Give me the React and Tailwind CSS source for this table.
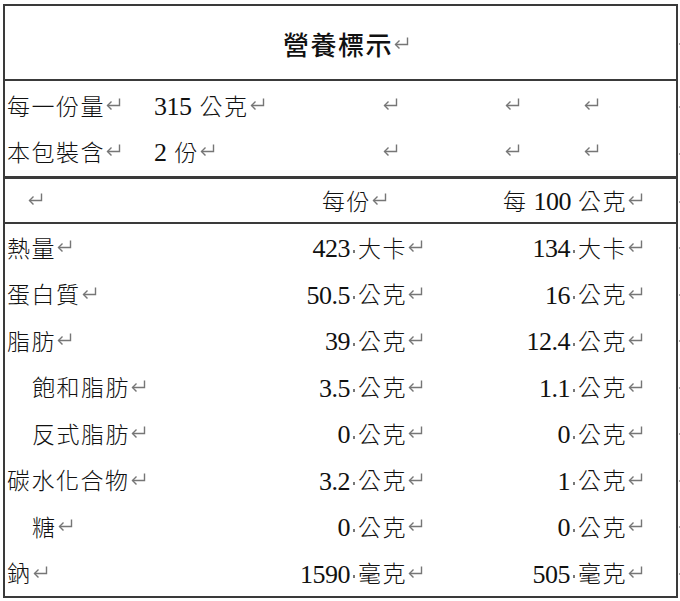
import React from "react";

const Ret = ({ cls = "" }) => (
  <svg
    width="17"
    height="14"
    viewBox="0 0 17 14"
    fill="none"
    stroke="#767676"
    strokeWidth="1.4"
    className={"inline-block shrink-0 mb-[6px] " + cls}
  >
    <path d="M14.5 1.5V8.5H2.5" />
    <path d="M6.5 4.5L2.5 8.5L6.5 12.5" />
  </svg>
);

const Dot = () => (
  <span className="inline-block w-[2px] h-[3px] bg-[#777] mx-[3px] mt-[4px] shrink-0" />
);

const EndMark = () => (
  <span className="absolute -right-[5px] top-1/2 w-[2px] h-[2px] bg-[#aaa]" />
);

const Num = ({ children, cls = "" }) => (
  <span className={"text-[26px] tracking-[-0.5px] " + cls}>{children}</span>
);

const Val = ({ n, u }) => (
  <span className="flex items-center justify-end">
    <Num>{n}</Num>
    <Dot />
    <span className="tracking-[1.5px]">{u}</span>
    <Ret />
  </span>
);

const rows = [
  { label: "熱量", indent: false, a: ["423", "大卡"], b: ["134", "大卡"] },
  { label: "蛋白質", indent: false, a: ["50.5", "公克"], b: ["16", "公克"] },
  { label: "脂肪", indent: false, a: ["39", "公克"], b: ["12.4", "公克"] },
  { label: "飽和脂肪", indent: true, a: ["3.5", "公克"], b: ["1.1", "公克"] },
  { label: "反式脂肪", indent: true, a: ["0", "公克"], b: ["0", "公克"] },
  { label: "碳水化合物", indent: false, a: ["3.2", "公克"], b: ["1", "公克"] },
  { label: "糖", indent: true, a: ["0", "公克"], b: ["0", "公克"] },
  { label: "鈉", indent: false, a: ["1590", "毫克"], b: ["505", "毫克"] },
];

export default function App() {
  return (
    <div className="w-[680px] h-[601px] bg-white pt-[4px] pl-[3px] font-['Liberation_Serif','Noto_Sans_CJK_TC','Noto_Sans_CJK_SC',serif] font-light text-[23px] text-[#111] leading-none">
      <div className="w-[675px] border-2 border-[#3a3a3a] flex flex-col">
        {/* title */}
        <div className="relative h-[75px] flex items-center justify-center border-b-2 border-[#3a3a3a] pl-[12px] pt-[9px]">
          <span className="text-[26px] tracking-[1.5px] font-medium">營養標示</span>
          <Ret cls="mb-[8px]" />
          <EndMark />
        </div>

        {/* serving info */}
        <div className="flex flex-col border-b-[3px] border-[#3a3a3a] pt-[1px]">
          {[
            ["每一份量", "315", "公克", "h-[48px] pt-[2px]"],
            ["本包裝含", "2", "份", "h-[46px]"],
          ].map(([l, n, u, h]) => (
            <div key={l} className={"relative grid grid-cols-[144px_233px_122px_79px_1fr] items-center " + h}>
              <span className="flex items-center pl-[2px] tracking-[1.5px]">
                {l}
                <Ret />
              </span>
              <span className="flex items-center pl-[5px]">
                <Num>{n}</Num>
                <span className="ml-[8px] tracking-[1.5px]">{u}</span>
                <Ret />
              </span>
              <span className="flex items-center">
                <Ret />
              </span>
              <span className="flex items-center">
                <Ret />
              </span>
              <span className="flex items-center">
                <Ret />
              </span>
              <EndMark />
            </div>
          ))}
        </div>

        {/* header */}
        <div className="relative h-[45px] grid grid-cols-[254px_165px_220px] items-center border-b-2 border-[#3a3a3a] pt-[3px]">
          <span className="flex items-center pl-[22px]">
            <Ret />
          </span>
          <span className="flex items-center justify-end pr-[36px] tracking-[1.5px]">
            每份
            <Ret />
          </span>
          <span className="flex items-center justify-end">
            <span className="tracking-[1.5px]">每</span>
            <Num cls="ml-[6px]">100</Num>
            <span className="ml-[7px] tracking-[1.5px]">公克</span>
            <Ret />
          </span>
          <EndMark />
        </div>

        {/* data */}
        <div className="flex flex-col">
          {rows.map((r) => (
            <div key={r.label} className="relative h-[46.5px] pt-[4px] grid grid-cols-[254px_165px_220px] items-center">
              <span className={"flex items-center tracking-[1.5px] " + (r.indent ? "pl-[27px]" : "pl-[2px]")}>
                {r.label}
                <Ret />
              </span>
              <Val n={r.a[0]} u={r.a[1]} />
              <Val n={r.b[0]} u={r.b[1]} />
              <EndMark />
            </div>
          ))}
        </div>
      </div>
    </div>
  );
}
